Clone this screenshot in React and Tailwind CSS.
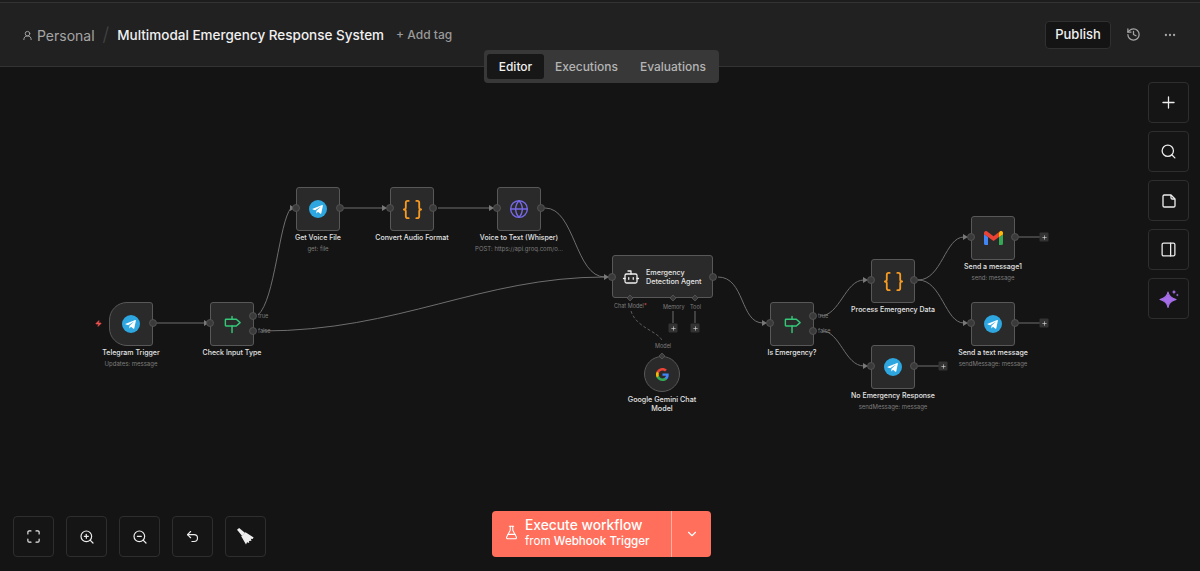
import {
  Bot,
  ChevronDown,
  Braces,
  Ellipsis,
  FlaskConical,
  Globe,
  History,
  Maximize,
  PanelRight,
  Plus,
  Search,
  Undo2,
  UserRound,
  Zap,
  ZoomIn,
  ZoomOut,
} from "lucide-react";

const font = { fontFamily: "Inter, sans-serif" };

const TelegramIcon = () => (
  <svg width="18" height="18" viewBox="0 0 24 24">
    <circle cx="12" cy="12" r="12" fill="#2ea6e0" />
    <path d="M5 11.8l12.6-5c.6-.2 1.1.2.9.9l-2.1 10c-.2.7-.6.9-1.2.5l-3.200-2.400-1.600 1.500c-.2.2-.3.3-.7.3l.2-3.200 5.900-5.300c.3-.2 0-.4-.4-.1l-7.200 4.600-3.100-1c-.7-.2-.7-.7.1-.8z" fill="#fff" />
  </svg>
);

const GmailIcon = () => (
  <svg width="19" height="14" viewBox="0 0 19 14">
    <path d="M0 3v9.500a1.500 1.500 0 0 0 1.500 1.500H4V6z" fill="#4285f4" />
    <path d="M15 6v8h2.500a1.500 1.500 0 0 0 1.500-1.500V3z" fill="#34a853" />
    <path d="M0 3.200V2a2 2 0 0 1 3.200-1.600L9.500 5.200 15.800.4A2 2 0 0 1 19 2v1.200L15 6 9.500 10 4 6z" fill="#ea4335" />
    <path d="M15 6V1.900l.8-1.500A2 2 0 0 1 19 2v1.200z" fill="#fbbc04" />
  </svg>
);

const GoogleIcon = () => (
  <svg width="13" height="13" viewBox="0 0 24 24">
    <path d="M23.500 12.300c0-.8-.1-1.600-.2-2.300H12v4.500h6.500c-.3 1.500-1.100 2.700-2.400 3.600v3h3.900c2.300-2.100 3.500-5.200 3.500-8.800z" fill="#4285f4" />
    <path d="M12 24c3.200 0 6-1.100 8-2.900l-3.900-3c-1.100.7-2.500 1.200-4.100 1.200-3.100 0-5.800-2.100-6.700-5H1.300v3.100C3.300 21.300 7.300 24 12 24z" fill="#34a853" />
    <path d="M5.300 14.300c-.5-1.500-.5-3.100 0-4.600V6.600h-4a12 12 0 0 0 0 10.800z" fill="#fbbc04" />
    <path d="M12 4.800c1.800 0 3.300.6 4.600 1.800l3.400-3.400C17.900 1.200 15.200 0 12 0 7.300 0 3.300 2.700 1.300 6.600l4 3.100c.9-2.800 3.600-4.900 6.700-4.900z" fill="#ea4335" />
  </svg>
);

const SwitchIcon = () => (
  <svg width="19" height="19" viewBox="0 0 20 20" fill="none" stroke="#35c87a" strokeWidth="1.500" strokeLinejoin="round" strokeLinecap="round">
    <path d="M9.500 1.500v3M9.500 11.500v7" />
    <path d="M2.500 5.200a.7.7 0 0 1 .7-.7h10.800l4 3.500-4 3.500H3.200a.7.7 0 0 1-.7-.7z" />
  </svg>
);

const CodeIcon = () => <Braces size={23} color="#f59a23" strokeWidth={1.9} />;

const NoteIcon = () => (
  <svg width="16" height="16" viewBox="0 0 24 24" fill="none" stroke="currentColor" strokeWidth="2" strokeLinejoin="round">
    <path d="M3 5a2 2 0 0 1 2-2h10l6 6v10a2 2 0 0 1-2 2H5a2 2 0 0 1-2-2z" />
    <path d="M15 3v4a2 2 0 0 0 2 2h4" />
  </svg>
);

const SparkleIcon = () => (
  <svg width="20" height="20" viewBox="0 0 20 20" fill="#a56ee8">
    <path d="M9 3c.6 4 2.600 6 8 7.500-5.400 1.500-7.400 3.500-8 8-.6-4.500-2.600-6.500-8-8 5.400-1.500 7.400-3.500 8-7.500z" stroke="#a56ee8" strokeWidth="1.200" strokeLinejoin="round" />
    <path d="M15 .5c.3 1.500 1 2.200 2.500 2.500-1.500.3-2.200 1-2.500 2.500-.3-1.500-1-2.200-2.500-2.500 1.500-.3 2.200-1 2.500-2.500z" />
    <path d="M18.300 4.500c.2.900.6 1.300 1.500 1.500-.9.2-1.300.6-1.500 1.500-.2-.9-.6-1.300-1.500-1.500.9-.2 1.300-.6 1.500-1.500z" />
  </svg>
);

const BroomIcon = () => (
  <svg width="17" height="17" viewBox="0 0 24 24" fill="#ededed">
    <path d="M0 2.500L3 0l8.500 7L7 11z" />
    <path d="M6 11.500L12 6l11.500 7.500-1.500 2-2.500-.5 1 3-3.500.2.200 3-3-1-1.500 3z" />
  </svg>
);

const nodes = [
  { x: 109, y: 302, label: "Telegram Trigger", sub: "Updates: message", icon: <TelegramIcon />, trigger: true },
  { x: 210, y: 302, label: "Check Input Type", icon: <SwitchIcon /> },
  { x: 296, y: 187, label: "Get Voice File", sub: "get: file", icon: <TelegramIcon /> },
  { x: 390, y: 187, label: "Convert Audio Format", icon: <CodeIcon /> },
  { x: 497, y: 187, label: "Voice to Text (Whisper)", sub: "POST: https://api.groq.com/o...", icon: <Globe size={20} color="#7668e8" strokeWidth={1.7} /> },
  { x: 770, y: 302, label: "Is Emergency?", icon: <SwitchIcon /> },
  { x: 871, y: 259, label: "Process Emergency Data", icon: <CodeIcon /> },
  { x: 871, y: 345, label: "No Emergency Response", sub: "sendMessage: message", icon: <TelegramIcon /> },
  { x: 971, y: 216, label: "Send a message1", sub: "send: message", icon: <GmailIcon /> },
  { x: 971, y: 302, label: "Send a text message", sub: "sendMessage: message", icon: <TelegramIcon /> },
];

const edges = [
  "M157 323H205",
  "M258 315C275 300 279 222 291 208",
  "M262 331C400 331 480 277 605 277",
  "M344 208H383",
  "M438 208H490",
  "M545 208C575 208 575 277 605 277",
  "M718 277C745 277 740 323 763 323",
  "M820 316C840 316 845 280 864 280",
  "M822 331C840 331 845 366 864 366",
  "M918 280C942 280 945 237 964 237",
  "M918 280C942 280 945 323 964 323",
  "M918 366H939",
  "M1019 237H1040",
  "M1019 323H1040",
  "M673 311V323",
  "M695 311V323",
];

const arrows = [
  [205, 323],
  [291, 208],
  [383, 208],
  [490, 208],
  [605, 277],
  [763, 323],
  [864, 280],
  [864, 366],
  [964, 237],
  [964, 323],
];

const plusBoxes = [
  [943, 366],
  [1044, 237],
  [1044, 323],
  [673, 328],
  [695, 328],
];

const handles = [
  [153, 323], [210, 323], [253, 316], [253, 331], [296, 208], [340, 208],
  [390, 208], [433, 208], [497, 208], [541, 208], [612, 277], [713, 277],
  [770, 323], [813, 316], [813, 331], [871, 280], [914, 280], [871, 366],
  [914, 366], [971, 237], [1015, 237], [971, 323], [1015, 323],
];

const diamonds = [
  [630, 298],
  [673, 298],
  [695, 298],
  [662, 356],
];

const smallLabels = [
  { x: 258, y: 316, text: "true" },
  { x: 258, y: 331, text: "false" },
  { x: 818, y: 316, text: "true" },
  { x: 818, y: 331, text: "false" },
];

const sideTools = [
  <Plus size={19} strokeWidth={1.6} />,
  <Search size={17} strokeWidth={1.8} />,
  <NoteIcon />,
  <PanelRight size={17} strokeWidth={1.8} />,
  <SparkleIcon />,
];

const bottomTools = [
  <Maximize size={15} strokeWidth={1.8} />,
  <ZoomIn size={16} strokeWidth={1.8} />,
  <ZoomOut size={16} strokeWidth={1.8} />,
  <Undo2 size={15} strokeWidth={1.8} />,
  <BroomIcon />,
];

const ToolButton = ({ children }) => (
  <button className="w-[41px] h-[41px] flex items-center justify-center rounded-[4px] border border-[#2e2e2e] bg-[#151515] text-[#ececec]">
    {children}
  </button>
);

const WorkflowNode = ({ node }) => (
  <div
    className="absolute w-[124px] flex flex-col items-center"
    style={{ left: node.x - 40, top: node.y }}
  >
    <div
      className={`w-[44px] h-[44px] flex items-center justify-center bg-[#2a2a2a] border border-[#585858] ${
        node.trigger ? "rounded-l-[18px] rounded-r-[3px]" : "rounded-[3px]"
      }`}
    >
      {node.icon}
    </div>
    <div className="mt-[2px] text-[7px] leading-[10px] font-medium text-[#e4e4e4] whitespace-nowrap">
      {node.label}
    </div>
    {node.sub && (
      <div className="mt-[1px] text-[6px] leading-[9px] text-[#7d7d7d] whitespace-nowrap">
        {node.sub}
      </div>
    )}
  </div>
);

export default function App() {
  return (
    <div className="relative w-[1200px] h-[571px] overflow-hidden flex flex-col bg-[#141414]" style={font}>
      <div className="h-[2px] bg-[#1d1d1d]" />
      <header className="h-[65px] flex items-center justify-between pl-[22px] pr-[22px] bg-[#212121] border-t border-b border-[#333333]">
        <div className="flex items-center pt-[1px]">
          <UserRound size={11} color="#a8a8a8" />
          <span className="ml-[4px] text-[14px] text-[#a5a5a5]">Personal</span>
          <span className="ml-[8px] text-[19px] font-light text-[#444444]">/</span>
          <span className="ml-[8px] text-[13.5px] font-medium text-[#f0f0f0]">
            Multimodal Emergency Response System
          </span>
          <span className="ml-[12px] text-[12px] font-medium text-[#9a9a9a]">+ Add tag</span>
        </div>
        <div className="flex items-center">
          <button className="w-[66px] h-[28px] rounded-[4px] bg-[#141414] border border-[#303030] text-[13px] font-medium text-[#f0f0f0]">
            Publish
          </button>
          <History size={15} color="#a5a5a5" className="ml-[15px]" />
          <Ellipsis size={14} color="#a5a5a5" className="ml-[22px] mr-[1px]" />
        </div>
      </header>

      <main className="flex-1 bg-[#141414] bg-[radial-gradient(#202020_0.6px,transparent_0.7px)] bg-[length:6px_6px]" />

      {/* edges sit under the nodes */}
      <svg className="absolute inset-0" width="1200" height="571" fill="none">
        {edges.map((d) => (
          <path key={d} d={d} stroke="#6e6e6e" strokeWidth="1" />
        ))}
        <path d="M631 311C636 328 660 332 662 341" stroke="#6e6e6e" strokeWidth="0.8" strokeDasharray="3 2" />
      </svg>

      {nodes.map((node) => (
        <WorkflowNode key={node.label} node={node} />
      ))}

      <Zap size={7} color="#ef5350" fill="#ef5350" className="absolute left-[95px] top-[320px]" />

      {/* agent node */}
      <div className="absolute left-[612px] top-[255px] w-[101px] h-[43px] flex items-center bg-[#2a2a2a] border border-[#585858] rounded-[3px]">
        <Bot size={18} color="#f0f0f0" strokeWidth={1.7} className="ml-[9px]" />
        <div className="ml-[6px] text-[7.2px] leading-[9px] font-medium text-[#e4e4e4]">
          Emergency
          <br />
          Detection Agent
        </div>
      </div>

      {/* model node */}
      <div className="absolute left-[602px] top-[356px] w-[120px] flex flex-col items-center">
        <div className="w-[36px] h-[36px] flex items-center justify-center rounded-full bg-[#2a2a2a] border border-[#585858]">
          <GoogleIcon />
        </div>
        <div className="mt-[3px] w-[80px] text-center text-[7.2px] leading-[9px] font-medium text-[#e4e4e4]">
          Google Gemini Chat Model
        </div>
      </div>

      {/* handles and arrows go over the node borders */}
      <svg className="absolute inset-0" width="1200" height="571" fill="none">
        {arrows.map(([x, y]) => (
          <path key={`${x}-${y}`} d={`M${x - 1} ${y - 3}L${x + 4} ${y}L${x - 1} ${y + 3}Z`} fill="#787878" />
        ))}
        {handles.map(([x, y]) => (
          <circle key={`${x}-${y}`} cx={x} cy={y} r="3.500" fill="#3a3a3a" stroke="#585858" strokeWidth="0.8" />
        ))}
        {diamonds.map(([x, y]) => (
          <path key={`${x}-${y}`} d={`M${x} ${y - 3}L${x + 3} ${y}L${x} ${y + 3}L${x - 3} ${y}Z`} fill="#3a3a3a" stroke="#585858" strokeWidth="0.8" />
        ))}
      </svg>

      {smallLabels.map((l) => (
        <span
          key={`${l.x}-${l.y}`}
          className="absolute -translate-y-1/2 text-[5.5px] leading-[8px] text-[#7d7d7d]"
          style={{ left: l.x, top: l.y }}
        >
          {l.text}
        </span>
      ))}

      {plusBoxes.map(([x, y]) => (
        <div
          key={`${x}-${y}`}
          className="absolute w-[9px] h-[9px] -translate-x-1/2 -translate-y-1/2 flex items-center justify-center rounded-[1px] bg-[#333333] text-[#dcdcdc]"
          style={{ left: x, top: y }}
        >
          <Plus size={6} strokeWidth={2.5} />
        </div>
      ))}

      <span className="absolute left-[614px] top-[302px] text-[5.5px] leading-[8px] text-[#7d7d7d]">
        Chat Model<span className="text-[#e0524d]">*</span>
      </span>
      <span className="absolute left-[663px] top-[303px] text-[5.5px] leading-[8px] text-[#7d7d7d]">Memory</span>
      <span className="absolute left-[690px] top-[303px] text-[5.5px] leading-[8px] text-[#7d7d7d]">Tool</span>
      <span className="absolute left-[655px] top-[342px] text-[5.5px] leading-[8px] text-[#7d7d7d]">Model</span>

      {/* tabs */}
      <div className="absolute left-[484px] top-[50px] w-[235px] h-[33px] flex items-center p-[3px] rounded-[4px] bg-[#383838]">
        <div className="w-[57px] h-[25px] flex items-center justify-center rounded-[3px] bg-[#171717] text-[12px] font-medium text-[#f0f0f0]">
          Editor
        </div>
        <div className="ml-[11px] text-[12px] font-medium text-[#b4b4b4]">Executions</div>
        <div className="ml-[22px] text-[12px] font-medium text-[#b4b4b4]">Evaluations</div>
      </div>

      {/* right tools */}
      <div className="absolute left-[1148px] top-[82px] flex flex-col gap-[8px]">
        {sideTools.map((icon, i) => (
          <ToolButton key={i}>{icon}</ToolButton>
        ))}
      </div>

      {/* bottom tools */}
      <div className="absolute left-[13px] top-[516px] flex gap-[12px]">
        {bottomTools.map((icon, i) => (
          <ToolButton key={i}>{icon}</ToolButton>
        ))}
      </div>

      {/* execute */}
      <div className="absolute left-[492px] top-[511px] w-[219px] h-[46px] flex rounded-[4px] bg-[#ff6f5c] text-white">
        <div className="w-[180px] flex items-center pl-[12px] pb-[3px] border-r border-[#ffb0a5]">
          <FlaskConical size={15} strokeWidth={1.7} />
          <div className="ml-[6px]">
            <div className="text-[13.8px] leading-[17px] font-medium">Execute workflow</div>
            <div className="text-[11.6px] leading-[15px]">
              from <span className="font-medium">Webhook Trigger</span>
            </div>
          </div>
        </div>
        <div className="flex-1 flex items-center justify-center">
          <ChevronDown size={14} strokeWidth={2} />
        </div>
      </div>
    </div>
  );
}
